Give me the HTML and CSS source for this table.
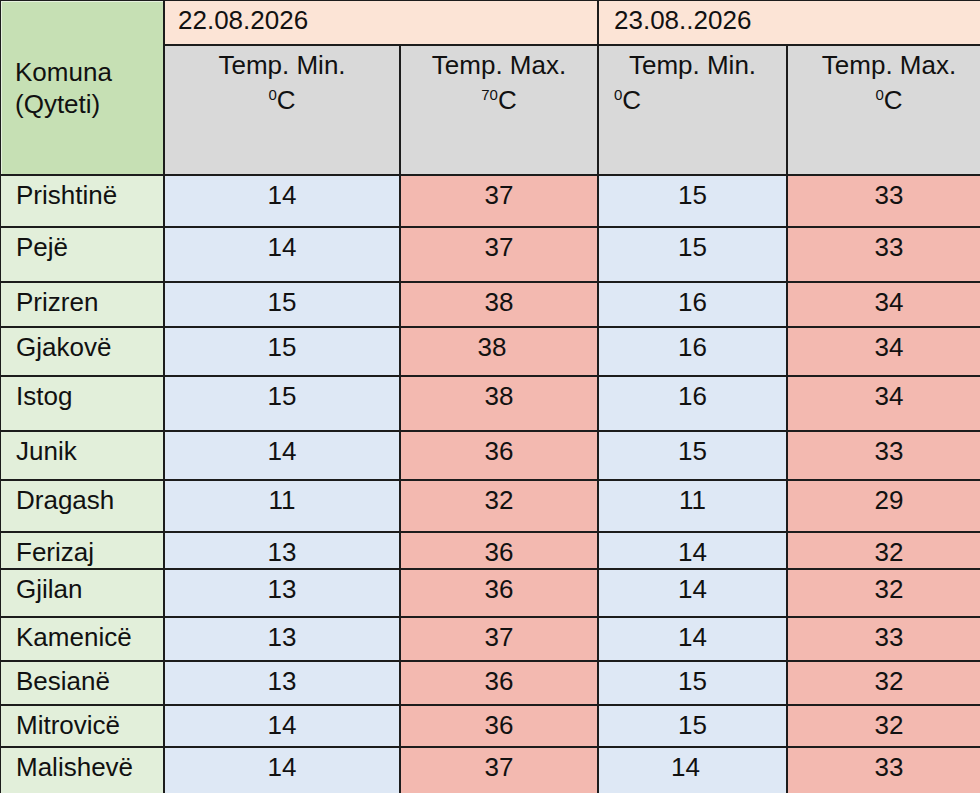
FILE: index.html
```html
<!DOCTYPE html>
<html lang="sq">
<head>
<meta charset="utf-8">
<title>Temperaturat</title>
<link rel="stylesheet" href="styles.css">
</head>
<body>
<div class="sheet">
  <div class="cell komuna-head"><span>Komuna</span><span>(Qyteti)</span></div>
  <div class="cell date date-a">22.08.2026</div>
  <div class="cell date date-b">23.08..2026</div>

  <div class="cell sub"><span class="ln">Temp. Min.</span><span class="ln"><sup>0</sup>C</span></div>
  <div class="cell sub"><span class="ln">Temp. Max.</span><span class="ln"><sup>70</sup>C</span></div>
  <div class="cell sub"><span class="ln">Temp. Min.</span><span class="ln left"><sup>0</sup>C</span></div>
  <div class="cell sub"><span class="ln">Temp. Max.</span><span class="ln"><sup>0</sup>C</span></div>

  <div class="cell name">Prishtinë</div><div class="cell min">14</div><div class="cell max">37</div><div class="cell min">15</div><div class="cell max">33</div>
  <div class="cell name">Pejë</div><div class="cell min">14</div><div class="cell max">37</div><div class="cell min">15</div><div class="cell max">33</div>
  <div class="cell name">Prizren</div><div class="cell min">15</div><div class="cell max">38</div><div class="cell min">16</div><div class="cell max">34</div>
  <div class="cell name">Gjakovë</div><div class="cell min">15</div><div class="cell max nudge">38</div><div class="cell min">16</div><div class="cell max">34</div>
  <div class="cell name">Istog</div><div class="cell min">15</div><div class="cell max">38</div><div class="cell min">16</div><div class="cell max">34</div>
  <div class="cell name">Junik</div><div class="cell min">14</div><div class="cell max">36</div><div class="cell min">15</div><div class="cell max">33</div>
  <div class="cell name">Dragash</div><div class="cell min">11</div><div class="cell max">32</div><div class="cell min">11</div><div class="cell max">29</div>
  <div class="cell name">Ferizaj</div><div class="cell min">13</div><div class="cell max">36</div><div class="cell min">14</div><div class="cell max">32</div>
  <div class="cell name">Gjilan</div><div class="cell min">13</div><div class="cell max">36</div><div class="cell min">14</div><div class="cell max">32</div>
  <div class="cell name">Kamenicë</div><div class="cell min">13</div><div class="cell max">37</div><div class="cell min">14</div><div class="cell max">33</div>
  <div class="cell name">Besianë</div><div class="cell min">13</div><div class="cell max">36</div><div class="cell min">15</div><div class="cell max">32</div>
  <div class="cell name">Mitrovicë</div><div class="cell min">14</div><div class="cell max">36</div><div class="cell min">15</div><div class="cell max">32</div>
  <div class="cell name">Malishevë</div><div class="cell min">14</div><div class="cell max">37</div><div class="cell min nudge">14</div><div class="cell max">33</div>
</div>
</body>
</html>
```

FILE: styles.css
```css
html, body {
  margin: 0;
  padding: 0;
  background: #ffffff;
  overflow: hidden;
}

body {
  width: 980px;
  height: 793px;
  font-family: "Liberation Sans", Arial, sans-serif;
  font-size: 26px;
  color: #111111;
}

.sheet {
  display: grid;
  width: 990px;
  grid-template-columns: 162px 234px 196px 187px 202px;
  grid-template-rows: 43px 128px 50px 53px 43px 47px 53px 47px 50px 35px 46px 42px 42px 40px 60px;
  gap: 2px;
  padding: 1px 0 0 1px;
  background: #1c1c1c;
}

.cell {
  line-height: 30px;
  padding-top: 4px;
  text-align: center;
  overflow: hidden;
  white-space: nowrap;
}

.komuna-head {
  grid-row: 1 / span 2;
  background: #c6e0b4;
  display: flex;
  flex-direction: column;
  justify-content: center;
  text-align: left;
  padding: 0 0 0 14px;
  line-height: 32px;
  box-shadow: inset 1px 1px 0 rgba(255, 255, 255, 0.55);
}

.date {
  grid-column: span 2;
  background: #fce4d6;
  text-align: left;
}

.date-a { padding-left: 13px; }
.date-b { padding-left: 15px; }

.sub {
  background: #d9d9d9;
  display: flex;
  flex-direction: column;
  line-height: 35px;
  padding-top: 2px;
}

.ln {
  display: block;
  text-align: center;
}

.ln.left {
  text-align: left;
  padding-left: 15px;
}

sup {
  font-size: 15px;
  line-height: 1;
  vertical-align: 9px;
}

.name {
  background: #e2efda;
  text-align: left;
  padding-left: 15px;
}

.min {
  background: #dee8f5;
}

.max {
  background: #f3b9b0;
}

.nudge {
  padding-right: 14px;
}
```
